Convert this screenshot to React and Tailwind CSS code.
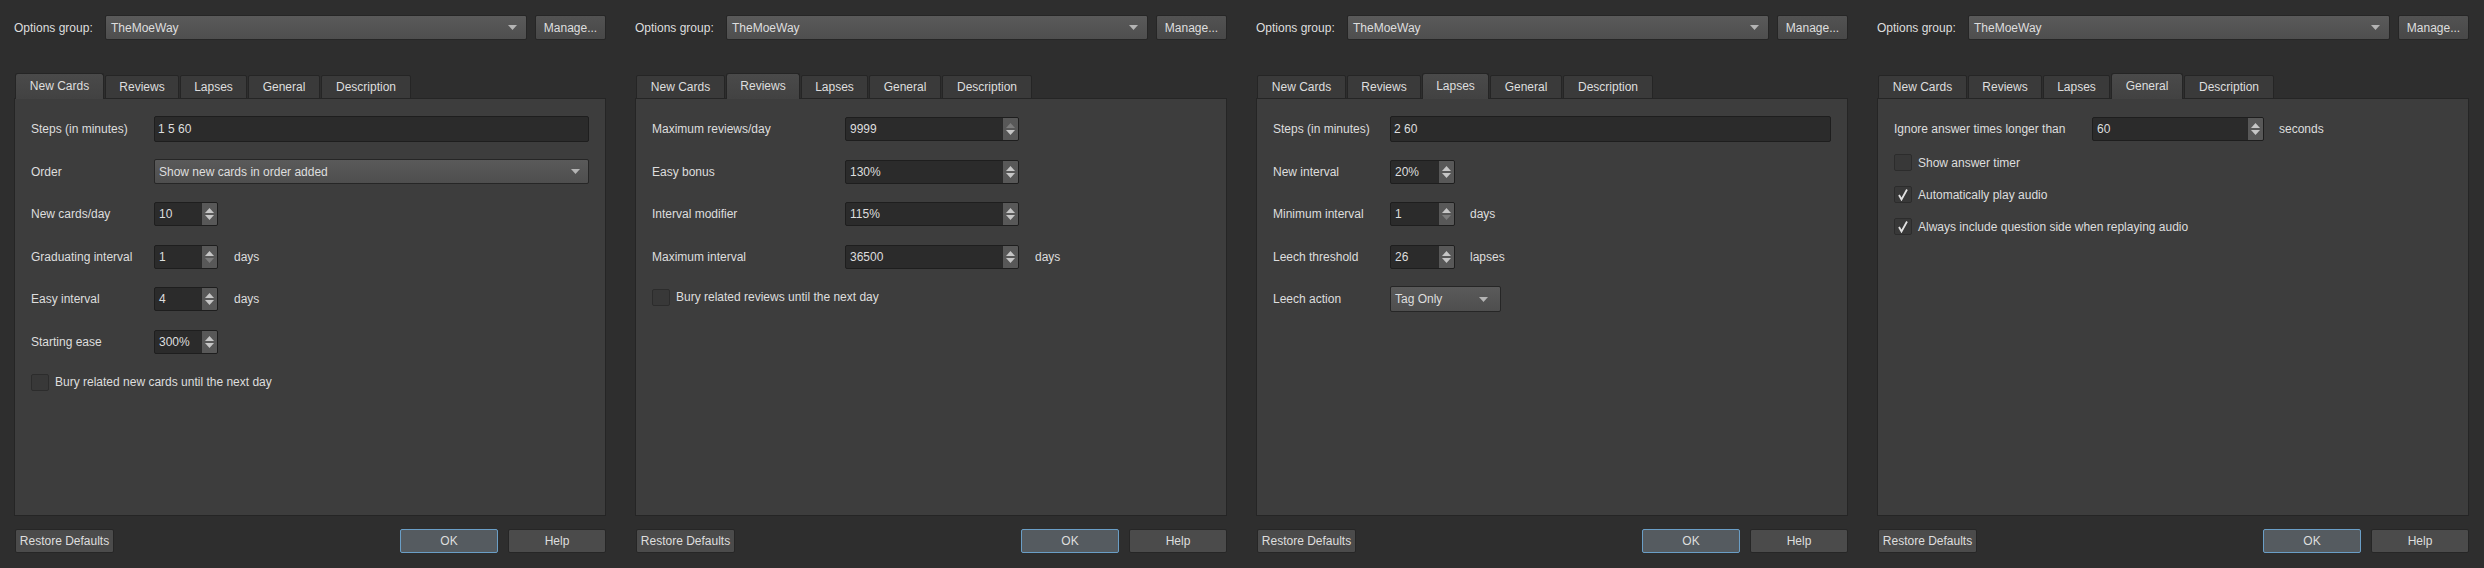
import React from "react";

const TABS = [
    { name: "New Cards", w: "w-[89px]" },
    { name: "Reviews", w: "w-[74px]" },
    { name: "Lapses", w: "w-[67px]" },
    { name: "General", w: "w-[72px]" },
    { name: "Description", w: "w-[90px]" },
];

function DownArrow({ color = "#b4b4b4" }) {
    return (
        <svg width="9" height="5" viewBox="0 0 9 5">
            <path d="M0 0 L9 0 L4.5 5 Z" fill={color} />
        </svg>
    );
}

function Combo({ value, className }) {
    return (
        <div className={`flex items-center justify-between rounded-[2px] border border-[#262626] bg-linear-to-b from-[#5a5a5a] to-[#4e4e4e] pl-[4px] pr-[8px] ${className}`}>
            <span>{value}</span>
            <DownArrow />
        </div>
    );
}

function SpinBox({ value, width, upOff = false, downOff = false }) {
    return (
        <div className={`flex h-[24px] overflow-hidden rounded-[2px] border border-[#1e1e1e] bg-[#2b2b2b] ${width}`}>
            <div className="flex flex-1 items-center pl-[4px]">{value}</div>
            <div className="flex w-[16px] flex-col items-center justify-center gap-[2px] border-l border-[#2a2a2a] bg-[#585858]">
                <svg width="9" height="5" viewBox="0 0 9 5">
                    <path d="M0 5 L4.5 0 L9 5 Z" fill={upOff ? "#7c7c7c" : "#c6c6c6"} />
                </svg>
                <svg width="9" height="5" viewBox="0 0 9 5">
                    <path d="M0 0 L9 0 L4.5 5 Z" fill={downOff ? "#7c7c7c" : "#c6c6c6"} />
                </svg>
            </div>
        </div>
    );
}

function LineEdit({ value, width }) {
    return (
        <div className={`flex h-[26px] items-center rounded-[2px] border border-[#1e1e1e] bg-[#2b2b2b] pl-[3px] ${width}`}>
            {value}
        </div>
    );
}

function Row({ label, labelW, children, unit, unitGap = "ml-[16px]" }) {
    return (
        <div className="flex h-[42.5px] items-center">
            <div className={`shrink-0 ${labelW}`}>{label}</div>
            {children}
            {unit && <span className={unitGap}>{unit}</span>}
        </div>
    );
}

function Check({ label, checked, h = "h-[38.5px]" }) {
    return (
        <div className={`flex items-center gap-[6px] ${h}`}>
            <div className="flex h-[17px] w-[18px] items-center justify-center rounded-[2px] border border-[#2c2c2c] bg-[#383838]">
                {checked && (
                    <svg width="12" height="13" viewBox="0 0 12 13">
                        <path d="M2 7 L4.5 11.5 L10 1.5" fill="none" stroke="#e2e2e2" strokeWidth="1.8" />
                    </svg>
                )}
            </div>
            <span>{label}</span>
        </div>
    );
}

function Panel({ active, children }) {
    return (
        <div className="flex w-[621px] shrink-0 flex-col pl-[14px] pr-[15px]">
            {/* options group bar */}
            <div className="mt-[15px] flex h-[25px] items-center">
                <span className="w-[91px] shrink-0">Options group:</span>
                <Combo value="TheMoeWay" className="h-[25px] w-[422px] pl-[5px] pr-[9px]" />
                <button className="ml-[8px] h-[25px] w-[71px] rounded-[2px] border border-[#262626] bg-linear-to-b from-[#525252] to-[#484848]">
                    Manage...
                </button>
            </div>

            {/* tabs */}
            <div className="relative z-10 mt-[33px] -mb-px ml-px flex h-[26px] items-end gap-px">
                {TABS.map((t, i) =>
                    i === active ? (
                        <div key={t.name} className={`flex h-[26px] items-center justify-center rounded-t-[3px] border border-b-0 border-[#252525] bg-linear-to-b from-[#4a4a4a] to-[#424242] pb-[2px] ${t.w}`}>
                            {t.name}
                        </div>
                    ) : (
                        <div key={t.name} className={`flex h-[24px] items-center justify-center rounded-t-[2px] border border-[#252525] bg-[#3a3a3a] ${t.w}`}>
                            {t.name}
                        </div>
                    )
                )}
            </div>

            {/* pane */}
            <div className="flex h-[418px] flex-col border border-[#252525] bg-[#3d3d3d] pl-[16px] pt-[9px]">
                {children}
            </div>

            {/* bottom buttons */}
            <div className="mt-[13px] flex h-[24px] items-center justify-between pl-px">
                <button className="h-[24px] w-[99px] rounded-[2px] border border-[#262626] bg-[#4b4b4b]">Restore Defaults</button>
                <div className="flex gap-[10px]">
                    <button className="h-[24px] w-[98px] rounded-[2px] border border-[#6a9ec6] bg-[#555b60]">OK</button>
                    <button className="h-[24px] w-[98px] rounded-[2px] border border-[#262626] bg-[#4b4b4b]">Help</button>
                </div>
            </div>
        </div>
    );
}

export default function App() {
    return (
        <div className="flex h-[568px] w-[2484px] bg-[#2e2e2e] font-['Liberation_Sans',Arial,sans-serif] text-[12px] text-[#dedede]">
            <Panel active={0}>
                <Row label="Steps (in minutes)" labelW="w-[123px]">
                    <LineEdit value="1 5 60" width="w-[435px]" />
                </Row>
                <Row label="Order" labelW="w-[123px]">
                    <Combo value="Show new cards in order added" className="h-[25px] w-[435px]" />
                </Row>
                <Row label="New cards/day" labelW="w-[123px]">
                    <SpinBox value="10" width="w-[64px]" />
                </Row>
                <Row label="Graduating interval" labelW="w-[123px]" unit="days">
                    <SpinBox value="1" width="w-[64px]" downOff />
                </Row>
                <Row label="Easy interval" labelW="w-[123px]" unit="days">
                    <SpinBox value="4" width="w-[64px]" />
                </Row>
                <Row label="Starting ease" labelW="w-[123px]">
                    <SpinBox value="300%" width="w-[64px]" />
                </Row>
                <Check label="Bury related new cards until the next day" />
            </Panel>

            <Panel active={1}>
                <Row label="Maximum reviews/day" labelW="w-[193px]">
                    <SpinBox value="9999" width="w-[174px]" upOff />
                </Row>
                <Row label="Easy bonus" labelW="w-[193px]">
                    <SpinBox value="130%" width="w-[174px]" />
                </Row>
                <Row label="Interval modifier" labelW="w-[193px]">
                    <SpinBox value="115%" width="w-[174px]" />
                </Row>
                <Row label="Maximum interval" labelW="w-[193px]" unit="days">
                    <SpinBox value="36500" width="w-[174px]" />
                </Row>
                <Check label="Bury related reviews until the next day" />
            </Panel>

            <Panel active={2}>
                <Row label="Steps (in minutes)" labelW="w-[117px]">
                    <LineEdit value="2 60" width="w-[441px]" />
                </Row>
                <Row label="New interval" labelW="w-[117px]">
                    <SpinBox value="20%" width="w-[65px]" />
                </Row>
                <Row label="Minimum interval" labelW="w-[117px]" unit="days" unitGap="ml-[15px]">
                    <SpinBox value="1" width="w-[65px]" downOff />
                </Row>
                <Row label="Leech threshold" labelW="w-[117px]" unit="lapses" unitGap="ml-[15px]">
                    <SpinBox value="26" width="w-[65px]" />
                </Row>
                <Row label="Leech action" labelW="w-[117px]">
                    <Combo value="Tag Only" className="h-[26px] w-[111px] pr-[12px]" />
                </Row>
            </Panel>

            <Panel active={3}>
                <Row label="Ignore answer times longer than" labelW="w-[198px]" unit="seconds" unitGap="ml-[15px]">
                    <SpinBox value="60" width="w-[172px]" />
                </Row>
                <div className="-mt-[4px] flex flex-col">
                    <Check label="Show answer timer" h="h-[32px]" />
                    <Check label="Automatically play audio" checked h="h-[32px]" />
                    <Check label="Always include question side when replaying audio" checked h="h-[32px]" />
                </div>
            </Panel>
        </div>
    );
}
